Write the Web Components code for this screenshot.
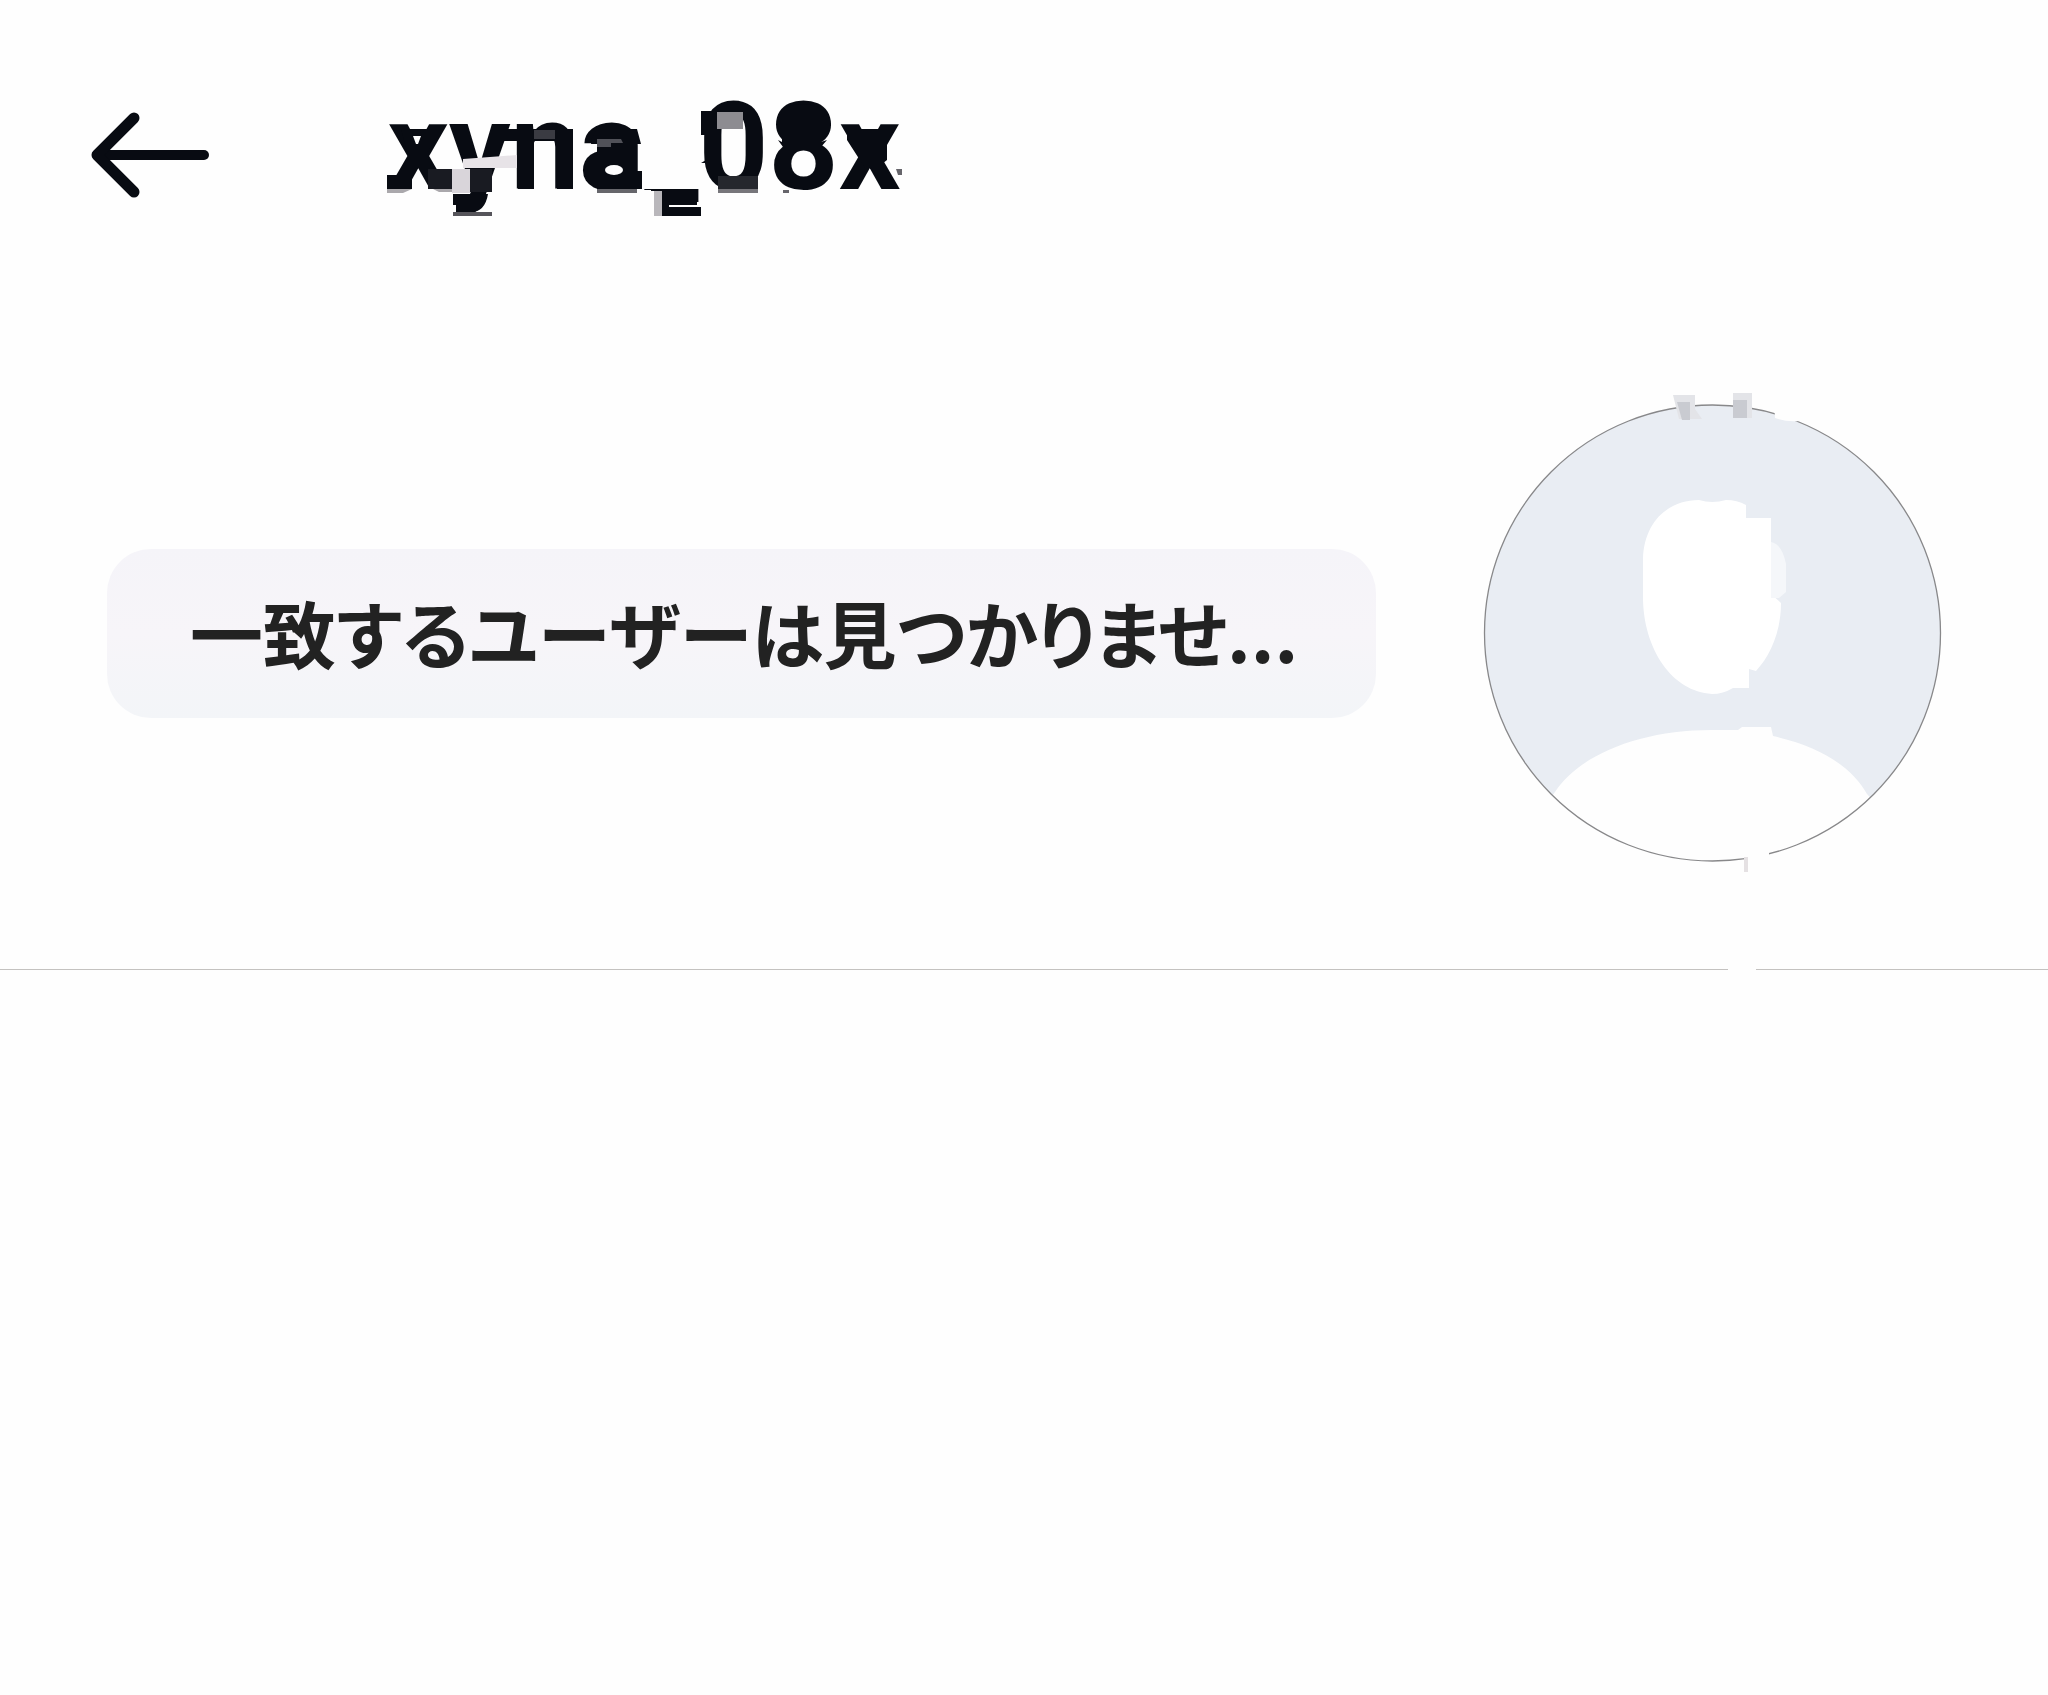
<!DOCTYPE html>
<html lang="ja">
<head>
<meta charset="utf-8">
<meta name="viewport" content="width=device-width, initial-scale=1">
<title>xyna_08x</title>
<style>
  body { margin: 0; background: #fefefe; color: #080b12; font-family: Roboto, "Noto Sans CJK JP", sans-serif; }
</style>
</head>
<body>
<profile-page>
  <profile-header slot="header">xyna_08x</profile-header>
  <note-bubble slot="note">一致するユーザーは見つかりませ...</note-bubble>
  <user-avatar slot="avatar"></user-avatar>
</profile-page>
<script>
class ShadowElement extends HTMLElement {
  constructor() {
    super();
    this.attachShadow({ mode: 'open' }).innerHTML = this.constructor.markup;
  }
}

customElements.define('profile-page', class extends ShadowElement {
  static markup = `
    <style>
      :host { display: block; min-height: 100vh; }
      section { display: flex; align-items: center; gap: 108px; padding: 196px 107px 107px; }
      slot[name=note]::slotted(*) { flex: 1; min-width: 0; }
      .divider { display: flex; gap: 28px; }
      .divider i { height: 1px; background: #c4c2c0; flex: 292; }
      .divider i:first-child { flex: 1728; }
    </style>
    <slot name="header"></slot>
    <main>
      <section><slot name="note"></slot><slot name="avatar"></slot></section>
      <div class="divider" role="separator"><i></i><i></i></div>
    </main>`;
});

customElements.define('profile-header', class extends ShadowElement {
  static markup = `
    <style>
      :host { display: block; }
      header { display: flex; align-items: flex-end; gap: 178px; padding: 88px 91px 0; }
      button { display: flex; align-items: center; width: 118px; height: 106px; padding: 0; border: 0; background: none; color: inherit; cursor: pointer; }
      h1 { position: relative; margin: 0; font-size: 122px; line-height: 120px; font-weight: 700; }
      h1 svg { position: absolute; left: 0; top: 0; overflow: visible; pointer-events: none; }
      svg { display: block; }
    </style>
    <header>
      <button type="button" aria-label="戻る">
        <svg width="118" height="86" viewBox="0 0 118 86" fill="none" stroke="currentColor" stroke-linecap="round" stroke-linejoin="round" aria-hidden="true">
          <path stroke-width="10" d="M6 43H113"/><path stroke-width="11" d="M43 6 6 43 43 80"/>
        </svg>
      </button>
      <h1><slot></slot>
        <svg width="516" height="130" viewBox="0 0 516 130" fill="#080b12" aria-hidden="true">
          <path d="M14 41H41V49H50L40 64H20Z"/><path fill="#fefefe" d="M26 48h8l-3 8h-2z"/>
          <path d="M0 87H25V101H0Z"/><path fill="#aaa8ac" d="M0 101H25L16 105H0Z"/>
          <path fill="#e7e3e7" d="M76 71 130 67V80H76Z"/>
          <path fill="#191b22" d="M41 81H65V101H41ZM83 81H105V104H83Z"/>
          <path fill="#d9d5da" d="M65 81H83V105H65Z"/><path fill="#aaa8ac" d="M46 101H65V104H52Z"/>
          <path d="M66 106H101Q98 124 84 124H69V117H66Z"/><path fill="#55545a" d="M66 124H105V128H66Z"/>
          <path d="M105 41H186V53H105ZM131 50H147V101H131ZM170 53H186V101H170Z"/><path fill="#3a3b42" d="M147 42H168V51H147Z"/>
          <path d="M205 50 210 41H250L254 56H250V83H255V101H210V87H200V77H210V56H204Z"/>
          <path fill="#505158" d="M210 51H234L236 55H224V59H210Z"/><ellipse fill="#fefefe" cx="227" cy="82" rx="9" ry="5"/>
          <path fill="#66666b" d="M210 101H250V105H210Z"/>
          <path fill="#fefefe" d="M250 102H267V120H250Z"/>
          <path d="M264 101H310V117H282V119H314V128H275V103H264Z"/><path fill="#b9b7bb" d="M267 103H275V128H267Z"/>
          <path d="M314 23H334V75H314L319 72V47H314Z"/><path fill="#8d8c91" d="M330 24H356V41H330Z"/>
          <path fill="#25272d" d="M331 88H371V101H331Z"/><path fill="#77767b" d="M331 101H371V105H331Z"/>
          <path d="M391 27Q399 16 415 16 432 16 440 27L434 29V54L440 52 434 59H396L391 52 395 54V29ZM460 41H500V72L490 80H478L460 52Z"/>
          <path fill="#66656b" d="M509 81H515V87H511ZM396 102H402V105H396Z"/>
        </svg>
      </h1>
    </header>`;
});

customElements.define('note-bubble', class extends ShadowElement {
  static markup = `
    <style>
      :host { display: block; }
      p { margin: 0; padding: 33px 83px 37px; border-radius: 44px; background: linear-gradient(#f5f4f9, #f7f5f9 50%, #f3f5f8);
          color: #222; font-family: "Noto Sans CJK JP", sans-serif; font-size: 73px; line-height: 99px; font-weight: 700;
          font-feature-settings: "palt"; white-space: nowrap; }
    </style>
    <p><slot></slot></p>`;
});

customElements.define('user-avatar', class extends ShadowElement {
  static markup = `
    <style>
      :host { display: block; flex: none; }
      svg { display: block; overflow: visible; }
    </style>
    <svg width="457" height="458" viewBox="0 0 457 458" role="img" aria-label="プロフィール写真">
      <circle cx="228.5" cy="229" r="228" fill="#e9edf3"/>
      <path fill="#fefefe" d="M71 388C96 350 157 326 228 326H254L258 323H287L289 332C335 342 367 362 383 390L392 400V458H62V400Z"/>
      <circle cx="228.5" cy="229" r="228" fill="none" stroke="#88888a" stroke-width="1.3"/>
      <path fill="#fff" d="M159 155C160 118 184 96 215 96Q228 100 242 96Q253 96 262 101V114H287V190L297 199C297 228 286 252 272 267L265 265V284H249Q239 290 228 290C188 288 158 244 159 190Z"/>
      <path fill="#f5f7fa" d="M287 138Q298 140 302 160V188L295 194H287Z"/>
      <path fill="#fefefe" d="M290 -2 291 14Q302 18 315 17L320 4V-2ZM262 440H285V460H262Z"/>
      <path fill="#e3e4e8" d="M189 -9H211V5L218 15H195ZM249 -11H268V14H249Z"/>
      <path fill="#c9cbd1" d="M193 -2H206V16H198ZM249 -4H263V14H249Z"/>
      <path fill="#e5e1e3" d="M260 453H264V468H260Z"/>
    </svg>`;
});
</script>
</body>
</html>
